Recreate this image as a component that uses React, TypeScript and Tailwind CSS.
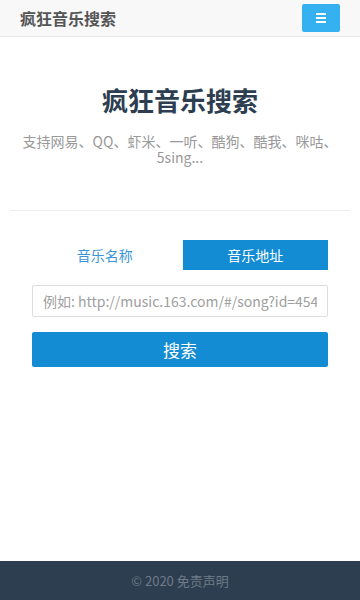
export default function App() {
  const font = { fontFamily: '"Noto Sans CJK SC", "Open Sans", sans-serif' };

  return (
    <div className="flex flex-col w-full min-h-[600px] bg-white" style={font}>
      {/* Navbar */}
      <div className="h-[37px] bg-[#f8f8f8] border-b border-[#e7e7e7] flex items-center justify-between pl-[20px] pr-[20px]">
        <span className="text-[16px] font-bold text-[#555]">疯狂音乐搜索</span>
        <button className="w-[38px] h-[28px] bg-[#35b0f0] rounded-[2px] flex flex-col items-center justify-center gap-[2px]">
          <span className="block w-[10px] h-[2px] bg-white" />
          <span className="block w-[10px] h-[2px] bg-white" />
          <span className="block w-[10px] h-[2px] bg-white" />
        </button>
      </div>

      {/* Header */}
      <div className="flex flex-col items-center pt-[45px]">
        <h1 className="text-[26px] leading-[36px] font-bold text-[#2c3e50]">疯狂音乐搜索</h1>
        <p className="mt-[15px] text-[14px] leading-[16px] text-[#999] text-center px-[14px]">
          支持网易、QQ、虾米、一听、酷狗、酷我、咪咕、5sing...
        </p>
      </div>

      <div className="mx-[10px] mt-[45px] border-t border-[#eee]" />

      {/* Tabs */}
      <div className="mt-[29px] px-[32px]">
        <div className="grid grid-cols-2 gap-[5px]">
          <button className="h-[30px] text-[14px] text-[#3a96d6] flex items-center justify-center">音乐名称</button>
          <button className="h-[30px] text-[14px] text-white bg-[#138cd4] flex items-center justify-center">音乐地址</button>
        </div>
        <input
          className="mt-[15px] w-full h-[32px] border border-[#ddd] rounded-[2px] px-[10px] text-[14px] text-[#555] placeholder:text-[#a0a0a0] outline-none"
          placeholder="例如: http://music.163.com/#/song?id=4545"
        />
        <button className="mt-[15px] w-full h-[35px] bg-[#138cd4] text-white text-[17px] rounded-[2px] flex items-center justify-center">
          搜索
        </button>
      </div>

      <div className="flex-1" />

      {/* Footer */}
      <div className="h-[39px] bg-[#2c3e50] flex items-center justify-center">
        <span className="text-[13px] text-[#6f7b88]">© 2020 免责声明</span>
      </div>
    </div>
  );
}
